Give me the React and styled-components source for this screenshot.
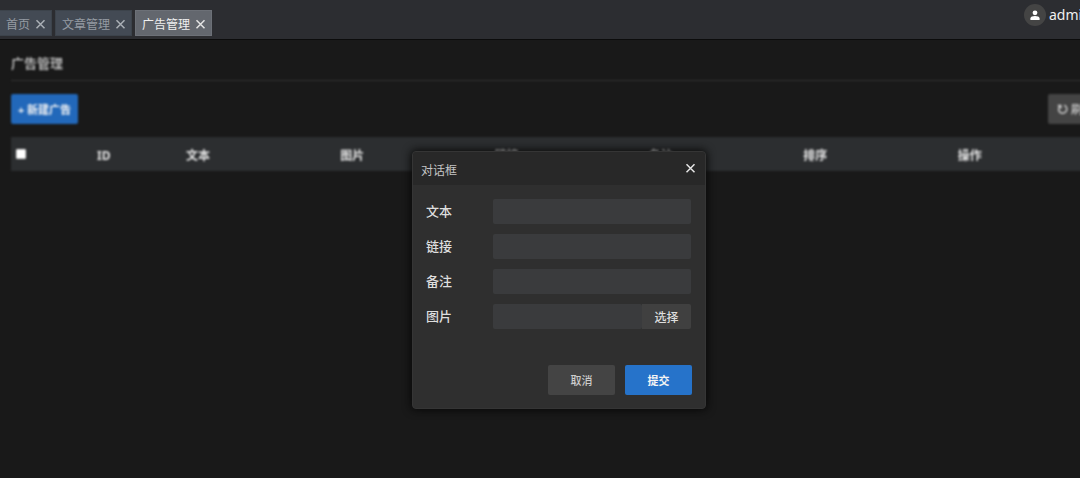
import React, { useState } from "react";
import styled, { createGlobalStyle } from "styled-components";

const GlobalStyle = createGlobalStyle`
	* {
		box-sizing: border-box;
	}

	body {
		margin: 0;
		background-color: #191919;
		color: #d8d8d8;
		font-family: "Noto Sans", "Noto Sans CJK SC", sans-serif;
		font-size: 12px;
		overflow: hidden;
	}

	button,
	input {
		font-family: inherit;
		margin: 0;
	}
`;

const Page = styled.div`
	position: relative;
	min-width: 1118px;
	min-height: 100vh;
`;

const TopBar = styled.header`
	display: flex;
	align-items: flex-start;
	justify-content: space-between;
	height: 40px;
	padding-right: 14px;
	background-color: #2c2d31;
	border-bottom: 1px solid #0c0c0c;
`;

const Tabs = styled.nav`
	display: flex;
	gap: 3px;
	padding-top: 10px;
`;

const Tab = styled.div`
	display: flex;
	align-items: center;
	gap: 5px;
	height: 26px;
	padding: 3px 5px 0 6px;
	border: 1px solid ${({ active }) => (active ? "#6c7077" : "#3c434b")};
	border-left-width: ${({ first }) => (first ? 0 : "1px")};
	background-color: ${({ active }) => (active ? "#63676e" : "#434a54")};
	color: ${({ active }) => (active ? "#f0f0f0" : "#959ba3")};
`;

const TabLink = styled.a`
	color: inherit;
	font-size: 12px;
	line-height: 18px;
	text-decoration: none;
`;

const IconButton = styled.button`
	display: flex;
	padding: 0;
	border: 0;
	background: none;
	color: ${({ bright }) => (bright ? "#e4e4e4" : "#abb0b6")};
	cursor: pointer;
`;

const User = styled.div`
	display: flex;
	align-items: center;
	gap: 3px;
	padding-top: 4px;
	color: #f0f0f0;
	font-size: 14px;
	line-height: 22px;
`;

const Avatar = styled.span`
	display: flex;
	align-items: center;
	justify-content: center;
	width: 22px;
	height: 22px;
	border-radius: 50%;
	background-color: #444444;
`;

const UserName = styled.span`
	width: 55px;
`;

const Content = styled.main`
	padding: 11px 14px 0 11px;
	filter: blur(1px);
`;

const Title = styled.h1`
	margin: 0;
	padding-bottom: 5px;
	border-bottom: 1px solid #363636;
	color: #d2d2d2;
	font-size: 13px;
	font-weight: 500;
	line-height: 24px;
`;

const Toolbar = styled.div`
	display: flex;
	justify-content: space-between;
	padding: 13px 0 13px;
`;

const Button = styled.button`
	display: flex;
	align-items: center;
	justify-content: center;
	gap: 2px;
	height: 30px;
	min-width: ${({ wide }) => (wide ? "67px" : "56px")};
	padding: 0 ${({ primary }) => (primary ? "6px" : "9px")};
	border: 0;
	border-radius: 2px;
	background-color: ${({ primary, dim }) => (primary ? (dim ? "#2268ba" : "#2673ca") : "#444444")};
	color: ${({ primary }) => (primary ? "#f4f4f4" : "#cccccc")};
	font-size: ${({ large }) => (large ? "12px" : "11px")};
	font-weight: ${({ primary }) => (primary ? 700 : 500)};
	cursor: pointer;
`;

const Table = styled.table`
	width: 100%;
	border-collapse: collapse;
	table-layout: fixed;
`;

const HeadCell = styled.th`
	width: ${({ width }) => width || "auto"};
	height: 34px;
	padding: ${({ check }) => (check ? "0 5px" : "2px 8px 0")};
	background-color: #2c2e30;
	color: #e6e6e6;
	font-size: 12px;
	font-weight: 700;
	text-align: left;
`;

const Checkbox = styled.input`
	display: block;
	width: 10px;
	height: 10px;
	appearance: none;
	border: 1px solid #e2e2e2;
	border-radius: 1px;
	background-color: #ffffff;
`;

const Overlay = styled.div`
	position: absolute;
	inset: 0;
	display: flex;
	align-items: flex-start;
	justify-content: center;
	padding-top: 151px;
`;

const Dialog = styled.section`
	width: 294px;
	border: 1px solid #353535;
	border-radius: 4px;
	background-color: #2f2f2f;
	box-shadow: 0 0 8px 1px #080808;
	overflow: hidden;
`;

const DialogHeader = styled.header`
	display: flex;
	align-items: center;
	justify-content: space-between;
	height: 33px;
	padding: 0 9px 0 8px;
	background-color: #282828;
`;

const DialogTitle = styled.h2`
	margin: 0;
	padding-top: 3px;
	color: #c4c4c4;
	font-size: 12px;
	font-weight: 400;
`;

const Form = styled.form`
	display: flex;
	flex-direction: column;
	gap: 10px;
	padding: 14px 13px 13px;
`;

const Field = styled.div`
	display: flex;
	align-items: center;
	height: 25px;
	padding-right: 1px;
`;

const Label = styled.label`
	width: 67px;
	padding-bottom: 3px;
	color: #dedede;
	font-size: 13px;
	font-weight: 500;
`;

const Input = styled.input`
	flex: 1;
	min-width: 0;
	height: 25px;
	padding: 0 6px;
	border: 0;
	border-radius: 2px;
	outline: none;
	background-color: #3a3b3d;
	color: #e2e2e2;
`;

const PickButton = styled.button`
	width: 49px;
	height: 25px;
	padding: 0;
	border: 0;
	border-radius: 0 2px 2px 0;
	background-color: #404040;
	color: #dddddd;
	font-size: 12px;
	font-weight: 500;
	cursor: pointer;
`;

const Actions = styled.div`
	display: flex;
	justify-content: flex-end;
	gap: 10px;
	padding-top: 26px;
`;

const CloseIcon = () => (
	<svg width="11" height="11" viewBox="0 0 11 11" fill="none" stroke="currentColor" strokeWidth="1.5">
		<path d="M1.5 1.3L9.5 9.3M9.5 1.3L1.5 9.3" />
	</svg>
);

const UserIcon = () => (
	<svg width="10" height="10" viewBox="0 0 10 10" fill="#ffffff">
		<circle cx="5" cy="2.8" r="2.4" />
		<path d="M0.4 10V8.5C0.4 6.9 2.8 6.1 5 6.1S9.6 6.9 9.6 8.5V10Z" />
	</svg>
);

const RefreshIcon = () => (
	<svg width="12" height="12" viewBox="0 0 12 12" fill="none" stroke="currentColor" strokeWidth="1.5">
		<path d="M3.6 2.6A4.1 4.1 0 1 0 7.2 2.3" />
		<path d="M0.8 2.4H3.8V5.4" />
	</svg>
);

const tabs = ["首页", "文章管理", "广告管理"];
const columns = ["文本", "图片", "链接", "备注", "排序", "操作"];
const fields = [
	{ id: "text", label: "文本" },
	{ id: "link", label: "链接" },
	{ id: "remark", label: "备注" },
	{ id: "image", label: "图片", picker: true },
];

const App = () => {
	const [active, setActive] = useState(2);
	const [isOpen, setIsOpen] = useState(true);
	const close = () => setIsOpen(false);

	return (
		<Page>
			<GlobalStyle />
			<TopBar>
				<Tabs>
					{tabs.map((name, index) => (
						<Tab key={name} active={index === active} first={index === 0}>
							<TabLink href="#" onClick={() => setActive(index)}>
								{name}
							</TabLink>
							<IconButton bright={index === active} aria-label="关闭">
								<CloseIcon />
							</IconButton>
						</Tab>
					))}
				</Tabs>
				<User>
					<Avatar>
						<UserIcon />
					</Avatar>
					<UserName>admin</UserName>
				</User>
			</TopBar>

			<Content>
				<Title>广告管理</Title>
				<Toolbar>
					<Button primary dim wide onClick={() => setIsOpen(true)}>
						+ 新建广告
					</Button>
					<Button large>
						<RefreshIcon />
						刷新
					</Button>
				</Toolbar>
				<Table>
					<thead>
						<tr>
							<HeadCell width="78px" check>
								<Checkbox type="checkbox" aria-label="全选" />
							</HeadCell>
							<HeadCell width="89px">ID</HeadCell>
							{columns.map((name) => (
								<HeadCell key={name}>{name}</HeadCell>
							))}
						</tr>
					</thead>
				</Table>
			</Content>

			{isOpen && (
				<Overlay>
					<Dialog role="dialog" aria-labelledby="dialog-title">
						<DialogHeader>
							<DialogTitle id="dialog-title">对话框</DialogTitle>
							<IconButton bright onClick={close} aria-label="关闭">
								<CloseIcon />
							</IconButton>
						</DialogHeader>
						<Form onSubmit={(event) => event.preventDefault()}>
							{fields.map(({ id, label, picker }) => (
								<Field key={id}>
									<Label htmlFor={id}>{label}</Label>
									<Input id={id} type="text" />
									{picker && <PickButton type="button">选择</PickButton>}
								</Field>
							))}
							<Actions>
								<Button type="button" wide onClick={close}>
									取消
								</Button>
								<Button type="submit" primary wide>
									提交
								</Button>
							</Actions>
						</Form>
					</Dialog>
				</Overlay>
			)}
		</Page>
	);
};

export default App;
